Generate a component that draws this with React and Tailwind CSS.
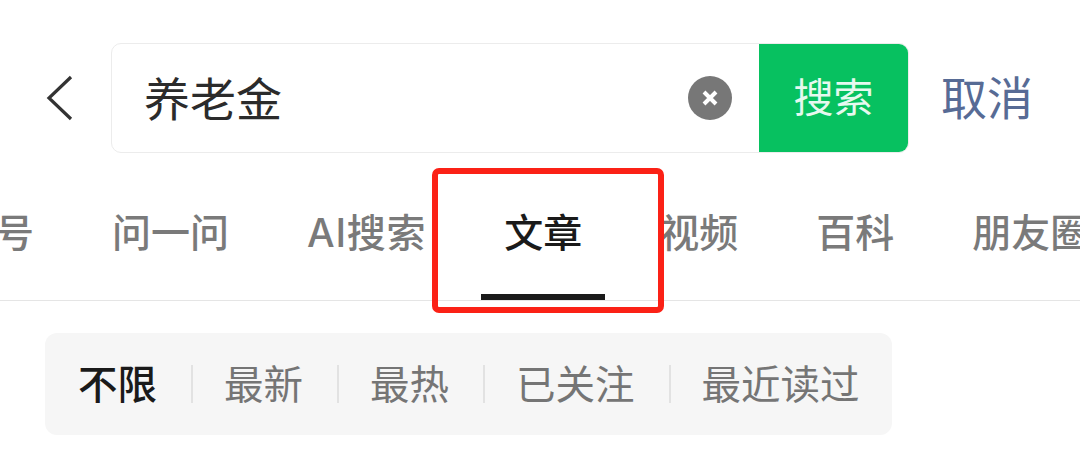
const cjk = "font-['Inter','Noto_Sans_CJK_SC',sans-serif]"

const tabs = ['公众号', '问一问', 'AI搜索', '文章', '视频', '百科', '朋友圈']
const filters = ['不限', '最新', '最热', '已关注', '最近读过']

function SearchBar() {
  return (
    <div className="flex items-center h-[110px] pt-[43px] box-content">
      <div className="w-[111px] shrink-0 pl-[46px]">
        <svg width="27" height="46" viewBox="0 0 27 46" fill="none">
          <path d="M25 2 L3 23 L25 44" stroke="#333" strokeWidth="3.2" />
        </svg>
      </div>
      <div className="flex w-[798px] h-[110px] rounded-[10px] border border-[#ececec] overflow-hidden">
        <div className="flex-1 flex items-center pl-[32px] pr-[27px] justify-between">
          <span className="pt-[2px] text-[46px] leading-none text-[#2b2b2b]">养老金</span>
          <span className="w-[44px] h-[44px] rounded-full bg-[#777] flex items-center justify-center">
            <svg width="18" height="18" viewBox="0 0 18 18">
              <path d="M3 3 L15 15 M15 3 L3 15" stroke="#fff" strokeWidth="4" />
            </svg>
          </span>
        </div>
        <div className="w-[149px] -my-px bg-[#07c160] flex items-center justify-center text-[40px] leading-none text-[#e6f9ef]">
          搜索
        </div>
      </div>
      <span className="ml-[32px] text-[46px] leading-none text-[#576b95]">取消</span>
    </div>
  )
}

function Tabs() {
  return (
    <div className="relative mt-[15px] h-[133px] border-b border-[#e5e5e5] overflow-hidden">
      <div className="flex gap-[78px] -ml-[83px] pt-[42px] whitespace-nowrap">
        {tabs.map((t) => (
          <span
            key={t}
            className={`shrink-0 text-[39px] leading-[46px] font-medium ${t === 'AI搜索' ? 'tracking-[0.75px]' : ''} ${t === '文章' ? 'text-[#1a1a1a]' : 'text-[#7a7a7a]'}`}
          >
            {t}
          </span>
        ))}
      </div>
      {/* active tab underline */}
      <div className="absolute left-[481px] bottom-0 w-[124px] h-[6px] bg-[#1a1a1a]" />
    </div>
  )
}

function Filters() {
  return (
    <div className="ml-[45px] mt-[32px] w-[847px] h-[102px] rounded-[12px] bg-[#f6f6f6] flex items-center pl-[33px]">
      {filters.map((f, i) => (
        <div key={f} className="flex items-center">
          {i > 0 && <span className="w-[2px] h-[38px] bg-[#e2e2e2] ml-[34px] mr-[31px]" />}
          <span className={`pt-[3px] text-[39.5px] leading-none ${i === 0 ? 'text-[#1a1a1a] font-medium' : 'text-[#757575]'}`}>
            {f}
          </span>
        </div>
      ))}
    </div>
  )
}

export default function App() {
  return (
    <div className={`relative w-[1080px] h-[454px] bg-white overflow-hidden ${cjk}`}>
      <SearchBar />
      <Tabs />
      <Filters />
      {/* red annotation box */}
      <div className="absolute left-[432px] top-[168px] w-[232px] h-[145px] border-[6px] border-[#fb2116] rounded-[7px]" />
    </div>
  )
}
